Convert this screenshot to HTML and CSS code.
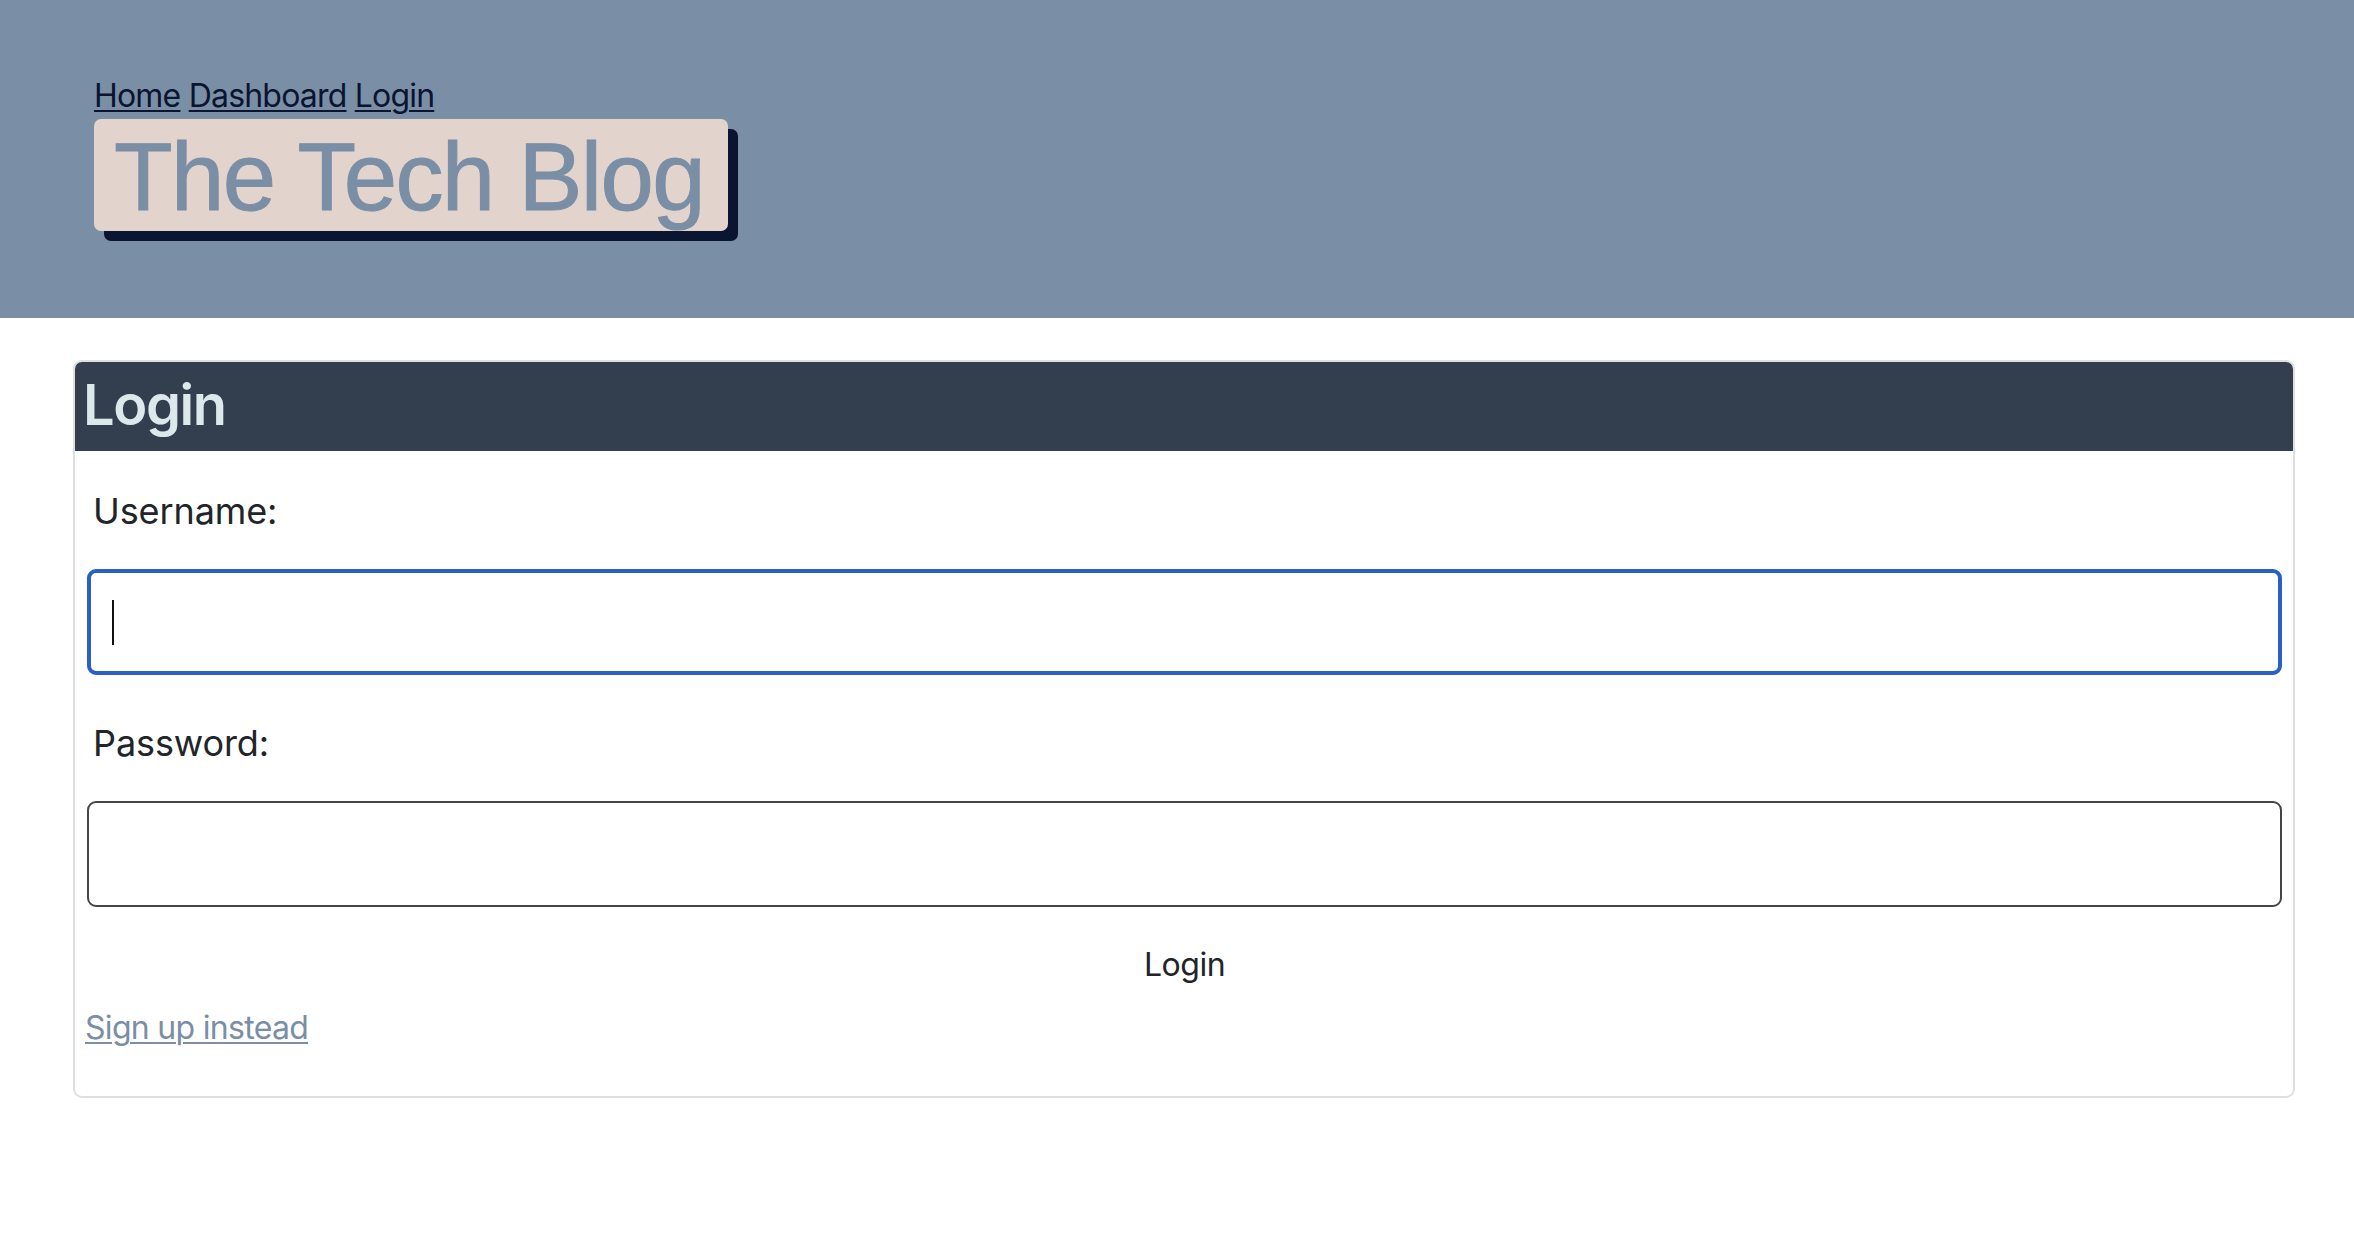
FILE: index.html
```html
<!DOCTYPE html>
<html lang="en">
<head>
<meta charset="utf-8">
<title>The Tech Blog</title>
<link rel="stylesheet" href="styles.css">
</head>
<body>
<header class="site-header">
  <nav class="site-nav">
    <a href="#">Home</a> <a href="#">Dashboard</a> <a href="#">Login</a>
  </nav>
  <h1 class="site-title">The Tech Blog</h1>
</header>
<main class="page">
  <section class="card">
    <div class="card-header">
      <h2 class="card-title">Login</h2>
    </div>
    <form class="login-form">
      <label class="field-label" for="username">Username:</label>
      <div class="field-wrap">
        <input class="field-input is-focused" id="username" type="text">
        <span class="caret"></span>
      </div>
      <label class="field-label second" for="password">Password:</label>
      <div class="field-wrap">
        <input class="field-input" id="password" type="password">
      </div>
      <div class="actions">
        <button class="login-btn" type="button">Login</button>
      </div>
    </form>
    <div class="card-footer">
      <a class="signup-link" href="#">Sign up instead</a>
    </div>
  </section>
</main>
</body>
</html>
```
FILE: styles.css
```css
html, body {
  margin: 0;
  padding: 0;
  background: #ffffff;
}

body {
  font-family: Inter, "Noto Sans", sans-serif;
  color: #212529;
}

.site-header {
  background: #7a8ea6;
  padding: 76px 0 87px 94px;
  display: flex;
  flex-direction: column;
  align-items: flex-start;
}

.site-nav {
  font-size: 32px;
  line-height: 39px;
  letter-spacing: -0.8px;
}

.site-nav a {
  color: #0b1430;
  text-decoration: underline;
  text-underline-offset: 3px;
  text-decoration-thickness: 2px;
}

.site-title {
  margin: 4px 0 0 0;
  font-family: "Liberation Sans", Arial, sans-serif;
  font-weight: 400;
  font-size: 96px;
  letter-spacing: -1.7px;
  line-height: 108px;
  padding: 4px 24px 0 20px;
  color: #7a8ea6;
  -webkit-text-stroke: 1px #7a8ea6;
  background: #e2d3cc;
  border-radius: 7px;
  box-shadow: 10px 10px 0 0 #0b1430;
}

.page {
  padding: 42px 59px 60px 73px;
}

.card {
  border: 2px solid #dfdfdf;
  border-radius: 9px;
  overflow: hidden;
}

.card-header {
  background: #333e4f;
  padding: 10px 8px 12px 8px;
}

.card-title {
  margin: 0;
  font-size: 56px;
  line-height: 67px;
  font-weight: 600;
  color: #dce8e9;
  letter-spacing: -1.4px;
}

.login-form {
  padding: 38px 11px 0 12px;
}

.field-label {
  display: block;
  font-size: 36px;
  line-height: 44px;
  padding-left: 6px;
  margin-bottom: 36px;
  letter-spacing: -0.1px;
}

.field-label.second {
  margin-top: 46px;
}

.field-wrap {
  position: relative;
}

.field-input {
  display: block;
  box-sizing: border-box;
  width: 100%;
  height: 106px;
  margin: 0;
  border: 2px solid #454545;
  border-radius: 9px;
  background: #ffffff;
  font-family: inherit;
  font-size: 36px;
  padding: 0 20px;
  outline: none;
}

.field-input.is-focused {
  border: 4px solid #2a5fc9;
}

.caret {
  position: absolute;
  left: 25px;
  top: 31px;
  width: 2px;
  height: 45px;
  background: #111111;
}

.actions {
  display: flex;
  justify-content: center;
  padding-top: 38px;
}

.login-btn {
  font-family: inherit;
  font-size: 32px;
  line-height: 39px;
  color: #212529;
  background: transparent;
  border: none;
  padding: 0;
  letter-spacing: -0.5px;
  cursor: pointer;
}

.card-footer {
  padding: 24px 10px 49px 10px;
}

.signup-link {
  font-size: 32px;
  line-height: 39px;
  color: #7a8ea6;
  text-decoration: underline;
  text-decoration-thickness: 2px;
  text-underline-offset: 3px;
  letter-spacing: -0.7px;
}
```
